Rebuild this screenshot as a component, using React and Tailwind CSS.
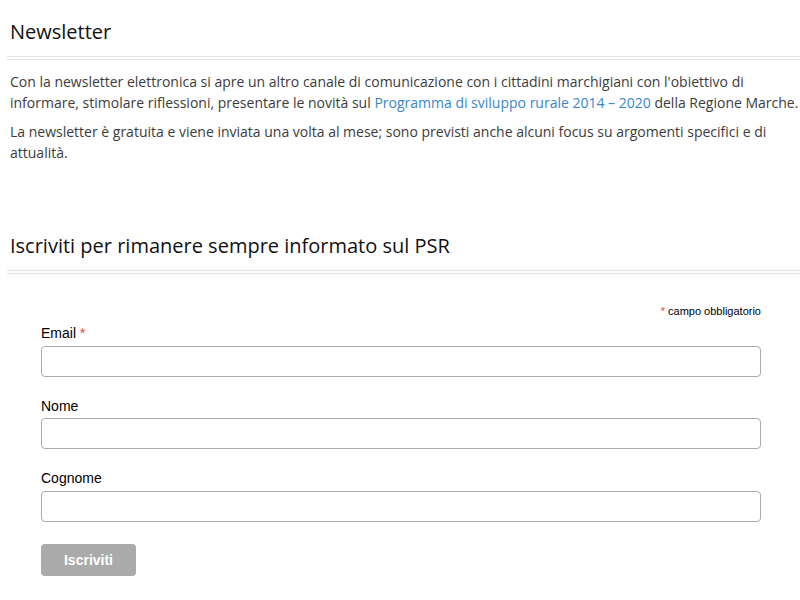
export default function App() {
  const open = { fontFamily: '"Open Sans", "Noto Sans", sans-serif' };
  const arial = { fontFamily: '"Liberation Sans", Arial, sans-serif' };
  return (
    <div className="w-[800px] h-[600px] bg-white overflow-hidden pl-[7px]" style={open}>
      <div className="pt-[18px]">
        <h1 className="text-[20px] leading-[28px] text-[#111] pl-[3px] pb-[10px] border-b border-[#e3e3e3]">Newsletter</h1>
        <div className="h-[2px]" />
        <div className="border-b border-[#e3e3e3]" />
      </div>
      <div className="pl-[3px] pt-[11px] text-[14px] leading-[21px] text-[#3c3c3c]">
        <p>
          Con la newsletter elettronica si apre un altro canale di comunicazione con i cittadini marchigiani con l'obiettivo di informare, stimolare riflessioni, presentare le novità sul{" "}
          <a className="text-[#3a87c8]">Programma di sviluppo rurale 2014 – 2020</a> della Regione Marche.
        </p>
        <p className="mt-[8px]">
          La newsletter è gratuita e viene inviata una volta al mese; sono previsti anche alcuni focus su argomenti specifici e di attualità.
        </p>
      </div>
      <div className="pt-[69px]">
        <h2 className="text-[20px] leading-[28px] text-[#111] pl-[3px] pb-[10px] border-b border-[#e3e3e3]">Iscriviti per rimanere sempre informato sul PSR</h2>
        <div className="h-[2px]" />
        <div className="border-b border-[#e3e3e3]" />
      </div>
      <form className="pl-[34px] pr-[39px] pt-[30px]" style={arial}>
        <div className="text-right text-[11px] leading-[14px] text-black"><span className="text-[#e74c3c]">*</span> campo obbligatorio</div>
        <div className="mt-[7px]">
          <label className="block text-[14px] leading-[17px] text-black mb-[4px]">Email <span className="text-[#e74c3c]">*</span></label>
          <input className="block w-full h-[31px] border border-[#aaa] rounded-[4px] bg-white" />
        </div>
        <div className="mt-[21px]">
          <label className="block text-[14px] leading-[17px] text-black mb-[3px]">Nome</label>
          <input className="block w-full h-[31px] border border-[#aaa] rounded-[4px] bg-white" />
        </div>
        <div className="mt-[21px]">
          <label className="block text-[14px] leading-[17px] text-black mb-[4px]">Cognome</label>
          <input className="block w-full h-[31px] border border-[#aaa] rounded-[4px] bg-white" />
        </div>
        <button type="button" className="mt-[22px] w-[95px] h-[32px] rounded-[4px] bg-[#aaaaaa] text-white font-bold text-[14px]">Iscriviti</button>
      </form>
    </div>
  );
}
